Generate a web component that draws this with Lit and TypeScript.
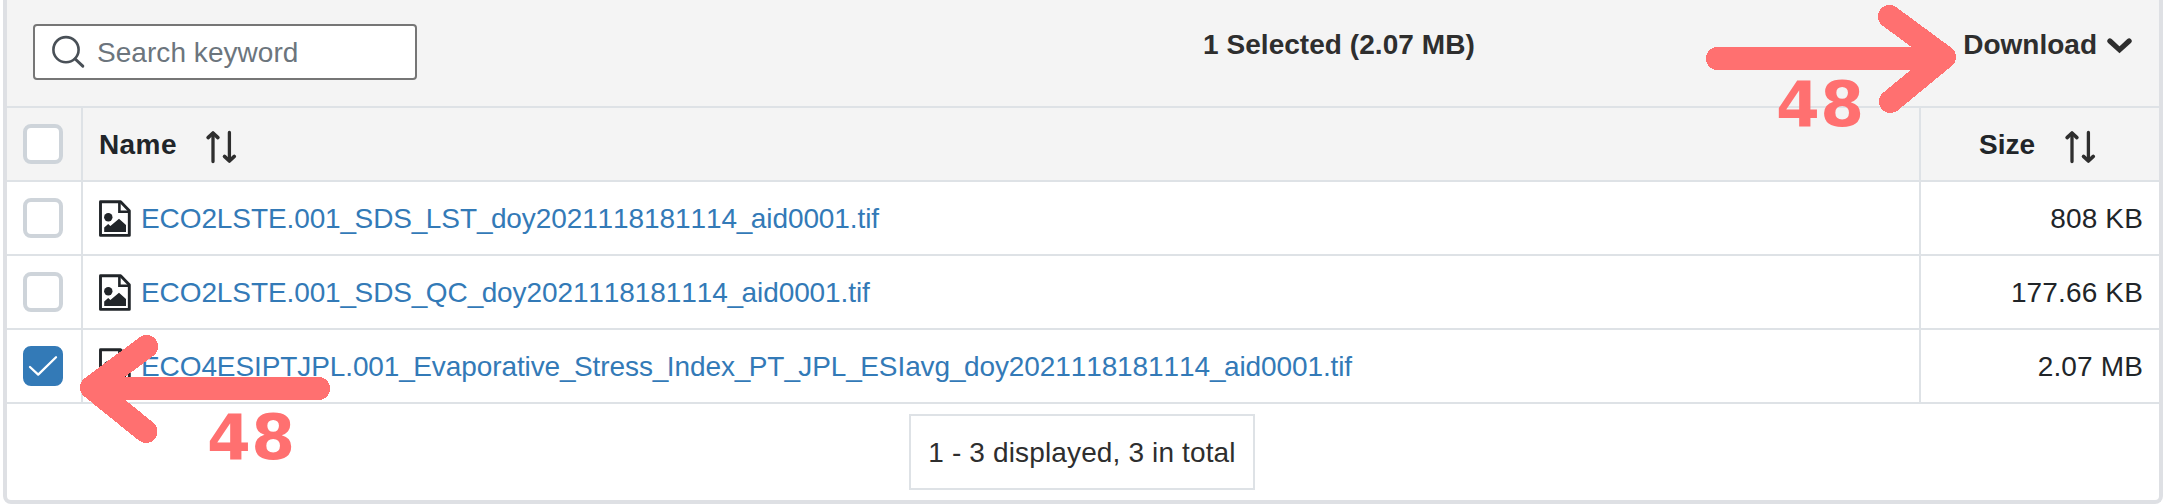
import { LitElement, html, css, svg } from "lit";
import { customElement, property, state } from "lit/decorators.js";
import { classMap } from "lit/directives/class-map.js";

interface FileRow {
  name: string;
  size: string;
  checked: boolean;
}

const sortIcon = html`<svg class="sort" width="32" height="34" viewBox="0 0 32 34">
  <g fill="none" stroke="#2e2e2e" stroke-linecap="round" stroke-linejoin="round">
    <path stroke-width="3.3" d="M8 31.5V4M24.4 2.5V30" />
    <path stroke-width="3.6" d="M3.1 7.6L8 3L12.9 7.6M19.5 26.4L24.4 31L29.3 26.4" />
  </g>
</svg>`;

const fileIcon = html`<svg class="file" width="32" height="38" viewBox="0 0 32 38">
  <path fill="none" stroke="#212529" stroke-width="2.9" stroke-linejoin="round"
    d="M1.5 2.8H21.6L30.3 11.8V36.4H1.5Z" />
  <path fill="none" stroke="#212529" stroke-width="2.6" d="M20.4 3V12.7H30.4" />
  <circle cx="9.3" cy="18.2" r="4.2" fill="#212529" />
  <path fill="#212529" d="M5.2 33V28.6L9.2 25L11.4 27L20 19.8L27 26V33Z" />
</svg>`;

@customElement("check-box")
export class CheckBox extends LitElement {
  static styles = css`
    :host { display: block; }
    .box {
      box-sizing: border-box;
      display: block;
      width: 40px;
      height: 40px;
      border: 4px solid #ced4da;
      border-radius: 8px;
      background: #fff;
    }
    .on { border-color: #337ab7; background: #337ab7; }
    .mark { display: block; width: 32px; height: 32px; }
  `;
  @property({ type: Boolean }) checked = false;

  render() {
    return html`<span class=${classMap({ box: true, on: this.checked })}>
      ${this.checked
        ? html`<svg class="mark" viewBox="0 0 32 32">
            <path d="M3 17L11.2 24.6L29 7.2" fill="none" stroke="#fff" stroke-width="2.3" stroke-linecap="round" stroke-linejoin="round" />
          </svg>`
        : ""}
    </span>`;
  }
}

@customElement("app-root")
export class AppRoot extends LitElement {
  static styles = css`
    :host {
      display: block;
      position: relative;
      width: 2163px;
      height: 504px;
      overflow: hidden;
      background: #fff;
      font: 28px/40px "Liberation Sans", Arial, sans-serif;
      font-kerning: none;
      color: #212529;
    }
    .card {
      box-sizing: border-box;
      display: flex;
      flex-direction: column;
      height: 504px;
      margin-left: 3px;
      border: 4px solid #dee0e4;
      border-top: 0;
      border-radius: 0 0 8px 8px;
      background: #fff;
    }
    .toolbar {
      box-sizing: border-box;
      display: grid;
      grid-template-columns: 1170px auto 1fr;
      align-items: start;
      height: 108px;
      padding: 24px 26px 0 26px;
      border-bottom: 2px solid #dee2e6;
      background: #f4f4f4;
      color: #2e2e2e;
      font-weight: 700;
    }
    .search {
      box-sizing: border-box;
      display: flex;
      align-items: center;
      width: 384px;
      height: 56px;
      padding-left: 16px;
      border: 2px solid #767676;
      border-radius: 4px;
      background: #fff;
      color: #6c757d;
      font-weight: 400;
    }
    .lens { width: 36px; height: 36px; margin-right: 10px; }
    .placeholder { padding-top: 2px; letter-spacing: 0.05px; }
    .selected { padding-top: 1px; letter-spacing: 0.05px; }
    .download {
      display: flex;
      justify-self: end;
      align-items: center;
      padding-top: 1px;
    }
    .chevron { width: 26px; height: 18px; margin-left: 10px; }
    .row {
      box-sizing: border-box;
      display: grid;
      grid-template-columns: 76px 1838px 1fr;
      height: 74px;
      border-bottom: 2px solid #dee2e6;
    }
    .head { background: #f4f4f4; font-weight: 700; }
    .cell {
      box-sizing: border-box;
      display: flex;
      align-items: center;
      border-right: 2px solid #dee2e6;
    }
    .cell:last-child { border-right: 0; }
    .pick { padding-left: 16px; }
    .name { padding: 2px 0 0 16px; }
    .size {
      justify-content: flex-end;
      padding: 2px 16px 0 0;
      letter-spacing: 0.15px;
    }
    .head .name { letter-spacing: 0.4px; }
    .head .size { justify-content: flex-start; padding-left: 58px; letter-spacing: 0; }
    .sort { margin: 4px 0 0 28.5px; }
    .file { margin: -2px 10px 0 0; }
    .link { color: #337ab7; white-space: nowrap; letter-spacing: -0.1px; }
    .rule { letter-spacing: -1.6px; }
    .footer {
      display: flex;
      justify-content: center;
      padding: 10px 2px 0 0;
    }
    .pager {
      box-sizing: border-box;
      display: flex;
      align-items: center;
      justify-content: center;
      width: 346px;
      height: 76px;
      padding-top: 2px;
      border: 2px solid #dee2e6;
      color: #2e2e2e;
      letter-spacing: 0.14px;
      white-space: nowrap;
    }
    .notes { position: absolute; left: 0; top: 0; }
    .num { font: 700 63px "DejaVu Sans", sans-serif; letter-spacing: 0.5px; fill: #ff7070; }
  `;

  @state() private files: FileRow[] = [
    { name: "ECO2LSTE.001_SDS_LST_doy2021118181114_aid0001.tif", size: "808 KB", checked: false },
    { name: "ECO2LSTE.001_SDS_QC_doy2021118181114_aid0001.tif", size: "177.66 KB", checked: false },
    { name: "ECO4ESIPTJPL.001_Evaporative_Stress_Index_PT_JPL_ESIavg_doy2021118181114_aid0001.tif", size: "2.07 MB", checked: true },
  ];

  private label(name: string) {
    return name.split(/(_)/).map((p) => (p === "_" ? html`<span class="rule">_</span>` : p));
  }

  private row(f: FileRow) {
    return html`<div class="row">
      <div class="cell pick"><check-box ?checked=${f.checked}></check-box></div>
      <div class="cell name">${fileIcon}<a class="link">${this.label(f.name)}</a></div>
      <div class="cell size">${f.size}</div>
    </div>`;
  }

  private arrow(head: string, shaft: string) {
    return svg`<g fill="none" stroke="#ff7070" stroke-width="23" stroke-linecap="round" stroke-linejoin="round" shape-rendering="crispEdges">
      <path d=${head} /><path d=${shaft} />
    </g>`;
  }

  render() {
    return html`
      <div class="card">
        <div class="toolbar">
          <div class="search">
            <svg class="lens" viewBox="0 0 36 36">
              <g fill="none" stroke="#495057" stroke-width="2.6" stroke-linecap="round">
                <circle cx="15" cy="15.7" r="12.6" /><path stroke-width="3" d="M24.2 25L31.8 32.2" />
              </g>
            </svg>
            <span class="placeholder">Search keyword</span>
          </div>
          <div class="selected">1 Selected (2.07 MB)</div>
          <div class="download">
            Download
            <svg class="chevron" viewBox="0 0 26 18">
              <path d="M2.9 5L12.5 13.8L22.1 5" fill="none" stroke="#2e2e2e" stroke-width="5.2" stroke-linecap="round" />
            </svg>
          </div>
        </div>
        <div class="row head">
          <div class="cell pick"><check-box></check-box></div>
          <div class="cell name">Name${sortIcon}</div>
          <div class="cell size">Size${sortIcon}</div>
        </div>
        ${this.files.map((f) => this.row(f))}
        <div class="footer"><div class="pager">1 - 3 displayed, 3 in total</div></div>
      </div>
      <svg class="notes" width="2163" height="504" viewBox="0 0 2163 504">
        ${this.arrow("M146.5 346.5L91.5 387.5L146 431.5", "M95 388.5H318.5")}
        ${this.arrow("M1889.5 16.5L1944.5 57L1890.5 101.5", "M1717.5 58.5H1940")}
        <text class="num" x="207" y="459">48</text>
        <text class="num" x="1776" y="126">48</text>
      </svg>
    `;
  }
}
